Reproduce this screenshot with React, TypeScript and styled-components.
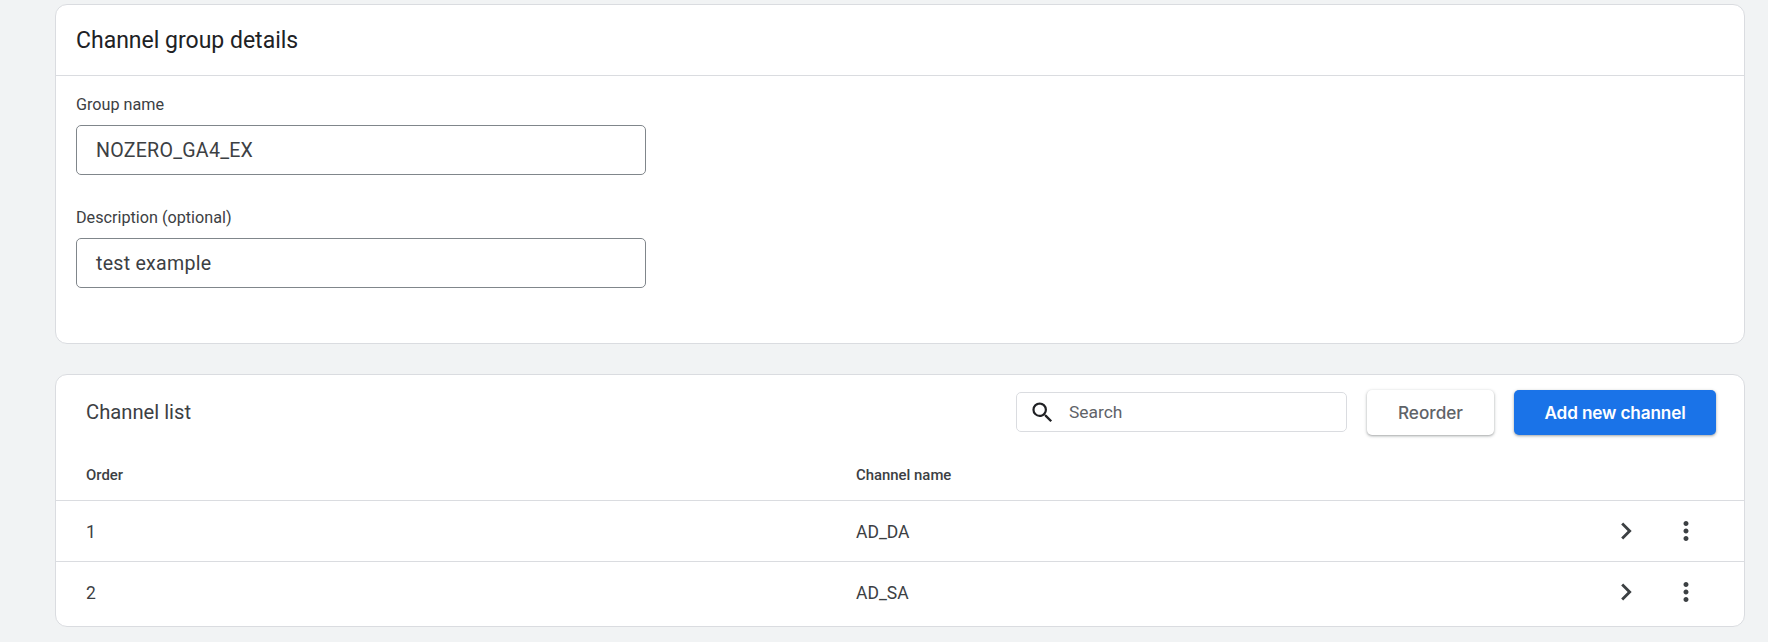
import React from "react";
import styled, {createGlobalStyle} from "styled-components";

const GlobalStyle = createGlobalStyle`
  html, body {
    margin: 0;
    padding: 0;
    background: #f1f3f4;
    font-family: Roboto, "Liberation Sans", sans-serif;
  }
`;

const Page = styled.div`
  display: flex;
  flex-direction: column;
  gap: 30px;
  width: 1768px;
  height: 642px;
  box-sizing: border-box;
  padding: 4px 23px 0 55px;
  overflow: hidden;
`;

const Card = styled.section`
  box-sizing: border-box;
  background: #fff;
  border: 1px solid #dadce0;
  border-radius: 12px;
  overflow: hidden;
`;

const DetailsCard = styled(Card)`
  height: 340px;
`;

const ListCard = styled(Card)`
  height: 253px;
`;

const DetailsHeader = styled.div`
  display: flex;
  align-items: center;
  height: 71px;
  box-sizing: border-box;
  padding-left: 20px;
  border-bottom: 1px solid #dadce0;
  font-size: 23px;
  color: #202124;
`;

const DetailsForm = styled.div`
  display: flex;
  flex-direction: column;
  gap: 33px;
  padding: 19px 0 0 20px;
`;

const Field = styled.div`
  display: flex;
  flex-direction: column;
  gap: 10px;
`;

const FieldLabel = styled.label`
  font-size: 16.2px;
  line-height: 20px;
  color: #3c4043;
`;

const TextBox = styled.div`
  display: flex;
  align-items: center;
  box-sizing: border-box;
  width: 570px;
  height: 50px;
  padding-left: 19px;
  border: 1px solid #80868b;
  border-radius: 5px;
  font-size: 19.6px;
  letter-spacing: 0.25px;
  color: #3c4043;
`;

const ListToolbar = styled.div`
  display: flex;
  align-items: center;
  height: 60px;
  margin-top: 7px;
  padding: 0 28px 0 30px;
`;

const ListTitle = styled.h2`
  flex: 1;
  margin: 0;
  font-size: 20.2px;
  font-weight: 400;
  color: #3c4043;
`;

const SearchBox = styled.div`
  display: flex;
  align-items: center;
  gap: 13px;
  box-sizing: border-box;
  width: 331px;
  height: 40px;
  margin-right: 20px;
  padding-left: 12px;
  border: 1px solid #dadce0;
  border-radius: 5px;
  font-size: 17.4px;
  color: #5f6368;
`;

const ToolbarButton = styled.button<{$primary?: boolean}>`
  box-sizing: border-box;
  height: 45px;
  width: ${(p) => (p.$primary ? "202px" : "127px")};
  margin-left: ${(p) => (p.$primary ? "20px" : "0")};
  border: none;
  border-radius: 5px;
  background: ${(p) => (p.$primary ? "#1a73e8" : "#fff")};
  color: ${(p) => (p.$primary ? "#fff" : "#5f6368")};
  box-shadow: 0 1px 2px rgba(60, 64, 67, 0.3), 0 1px 3px 1px rgba(60, 64, 67, 0.15);
  font-family: "Inter", Roboto, sans-serif;
  font-size: 17.2px;
  font-weight: ${(p) => (p.$primary ? 600 : 500)};
  letter-spacing: ${(p) => (p.$primary ? "-0.15px" : "0")};
`;

const TableHead = styled.div`
  display: grid;
  grid-template-columns: 770px 1fr;
  align-items: center;
  height: 50px;
  margin-top: 8px;
  box-sizing: border-box;
  padding-left: 30px;
  font-size: 14.9px;
  font-weight: 500;
  color: #3c4043;
`;

const Row = styled.div`
  display: grid;
  grid-template-columns: 770px 1fr 60px 60px;
  align-items: center;
  height: 61px;
  box-sizing: border-box;
  padding: 1px 28px 0 30px;
  border-top: 1px solid #dadce0;
  font-size: 17.5px;
  color: #3c4043;
`;

const RowIcon = styled.svg<{$size: number}>`
  display: block;
  justify-self: center;
  margin-top: -1px;
  width: ${(p) => p.$size}px;
  height: ${(p) => p.$size}px;
  fill: #3c4043;
`;

const SearchIcon = styled.svg`
  display: block;
  flex: none;
  width: 27px;
  height: 27px;
  fill: #202124;
`;

const rows = [
  {order: 1, name: "AD_DA"},
  {order: 2, name: "AD_SA"},
];

const App: React.FC = () => {
  return (
      <Page>
        <GlobalStyle/>
        <DetailsCard>
          <DetailsHeader>Channel group details</DetailsHeader>
          <DetailsForm>
            <Field>
              <FieldLabel>Group name</FieldLabel>
              <TextBox>NOZERO_GA4_EX</TextBox>
            </Field>
            <Field>
              <FieldLabel>Description (optional)</FieldLabel>
              <TextBox>test example</TextBox>
            </Field>
          </DetailsForm>
        </DetailsCard>
        <ListCard>
          <ListToolbar>
            <ListTitle>Channel list</ListTitle>
            <SearchBox>
              <SearchIcon viewBox="0 0 24 24">
                <path d="M15.5 14h-.79l-.28-.27A6.471 6.471 0 0 0 16 9.5 6.5 6.5 0 1 0 9.5 16c1.61 0 3.09-.59 4.23-1.57l.27.28v.79l5 4.99L20.49 19l-4.99-5zm-6 0C7.01 14 5 11.99 5 9.5S7.01 5 9.5 5 14 7.01 14 9.5 11.99 14 9.5 14z"/>
              </SearchIcon>
              Search
            </SearchBox>
            <ToolbarButton>Reorder</ToolbarButton>
            <ToolbarButton $primary>Add new channel</ToolbarButton>
          </ListToolbar>
          <TableHead>
            <span>Order</span>
            <span>Channel name</span>
          </TableHead>
          {rows.map((row) => (
              <Row key={row.order}>
                <span>{row.order}</span>
                <span>{row.name}</span>
                <RowIcon $size={34} viewBox="0 0 24 24">
                  <path d="M8.59 16.59 13.17 12 8.59 7.41 10 6l6 6-6 6z"/>
                </RowIcon>
                <RowIcon $size={30} viewBox="0 0 24 24">
                  <path d="M12 8c1.1 0 2-.9 2-2s-.9-2-2-2-2 .9-2 2 .9 2 2 2zm0 2c-1.1 0-2 .9-2 2s.9 2 2 2 2-.9 2-2-.9-2-2-2zm0 6c-1.1 0-2 .9-2 2s.9 2 2 2 2-.9 2-2-.9-2-2-2z"/>
                </RowIcon>
              </Row>
          ))}
        </ListCard>
      </Page>
  );
};

export default App;
